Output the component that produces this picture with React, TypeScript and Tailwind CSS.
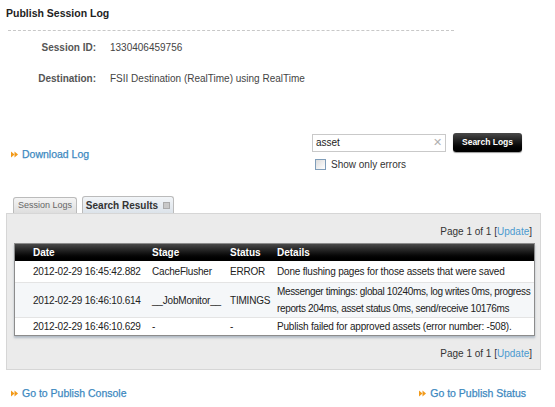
import React from "react";

const Arrow = () => (
  <svg width="7" height="7" viewBox="0 0 7 7" className="shrink-0">
    <polygon points="0,0.5 3.5,3.5 0,6.5" fill="#f29a1a" />
    <polygon points="3.5,0.5 7,3.5 3.5,6.5" fill="#f29a1a" />
  </svg>
);

const LinkArrow = ({ text }: { text: string }) => (
  <div className="flex items-center gap-[4px]">
    <Arrow />
    <span className="text-[#3d89bf] text-[10.5px] [-webkit-text-stroke:0.25px_#3d89bf]">{text}</span>
  </div>
);

const rows = [
  { date: "2012-02-29 16:45:42.882", stage: "CacheFlusher", status: "ERROR", details: ["Done flushing pages for those assets that were saved"], cls: "bg-white h-[21px]" },
  { date: "2012-02-29 16:46:10.614", stage: "__JobMonitor__", status: "TIMINGS", details: ["Messenger timings: global 10240ms, log writes 0ms, progress", "reports 204ms, asset status 0ms, send/receive 10176ms"], cls: "bg-[#f5f7f9] h-[35px]" },
  { date: "2012-02-29 16:46:10.629", stage: "-", status: "-", details: ["Publish failed for approved assets (error number: -508)."], cls: "bg-white h-[18px]" },
];

const PageLine = () => (
  <div className="flex justify-end pr-[8px] text-[10px] text-[#333] leading-[12px]">
    Page 1 of 1 [<span className="text-[#4a9ad0]">Update</span>]
  </div>
);

export default function App() {
  return (
    <div
      className="w-[555px] h-[407px] bg-white text-[#333] overflow-hidden"
      style={{ fontFamily: '"Liberation Sans", Arial, sans-serif' }}
    >
      <div className="pl-[6px] pt-[6px] text-[10.5px] font-bold text-[#222] leading-[14px]">Publish Session Log</div>
      <div className="ml-[8px] mt-[10px] w-[446px] border-t border-dashed border-[#c8c8c8]" />
      <div className="mt-[9px] flex items-center h-[14px] text-[10px]">
        <div className="w-[96px] text-right font-bold text-[#555]">Session ID:</div>
        <div className="ml-[14px] text-[#444]">1330406459756</div>
      </div>
      <div className="mt-[17px] flex items-center h-[14px] text-[10px]">
        <div className="w-[96px] text-right font-bold text-[#555]">Destination:</div>
        <div className="ml-[14px] text-[#444]">FSII Destination (RealTime) using RealTime</div>
      </div>

      <div className="mt-[48px] flex items-start">
        <div className="pl-[11px] pt-[14px]">
          <LinkArrow text="Download Log" />
        </div>
        <div className="ml-auto mr-[33px] flex flex-col">
          <div className="flex items-center">
            <div className="w-[134px] h-[18px] border border-[#c9c9c9] bg-white flex items-center px-[3px] text-[10px] text-[#222]">
              <span className="flex-1">asset</span>
              <span className="text-[#b0b0b0] text-[11px] leading-none">✕</span>
            </div>
            <button className="ml-[7px] w-[69px] h-[19px] rounded-[3px] bg-gradient-to-b from-[#4a4a4a] to-[#000] text-white text-[8.5px] font-bold shadow-[0_1px_1px_rgba(0,0,0,0.4)]">
              Search Logs
            </button>
          </div>
          <div className="mt-[5px] flex items-center pl-[3px] text-[10px] text-[#333]">
            <div className="w-[11px] h-[11px] border border-[#7f9db9] bg-gradient-to-br from-[#dcdcdc] to-white" />
            <span className="ml-[5px]">Show only errors</span>
          </div>
        </div>
      </div>

      <div className="mt-[23px] flex items-end pl-[13px] h-[18px]">
        <div className="h-[16px] w-[64px] border border-b-0 border-[#bbb] rounded-t-[3px] bg-gradient-to-b from-[#f4f4f4] to-[#dedede] flex items-center justify-center text-[9px] text-[#666]">
          Session Logs
        </div>
        <div className="ml-[5px] h-[17px] w-[92px] border border-b-0 border-[#bbb] rounded-t-[3px] bg-gradient-to-b from-[#f2f5f8] to-[#dce3ea] flex items-center justify-center gap-[5px] text-[10px] font-bold text-[#333]">
          Search Results
          <span className="w-[7px] h-[7px] bg-[#c8c8c8] border border-[#aaa] inline-block" />
        </div>
      </div>
      <div className="mx-[6px] w-[535px] h-[157px] bg-[#ebebeb] border border-[#d6d6d6] pt-[12px]">
        <PageLine />
        <div className="mt-[5px] ml-[7px] mr-[5px] border border-[#8c8c8c] bg-white shadow-[0_2px_2px_rgba(120,140,160,0.5)]">
          <div className="flex h-[17px] items-center bg-gradient-to-b from-[#4a4a4a] to-[#000] text-white font-bold text-[10px]">
            <div className="w-[137px] shrink-0 pl-[18px]">Date</div>
            <div className="w-[78px] shrink-0">Stage</div>
            <div className="w-[47px] shrink-0">Status</div>
            <div className="flex-1">Details</div>
          </div>
          {rows.map((r, i) => (
            <div key={i} className={`flex items-center ${r.cls} ${i > 0 ? "border-t border-[#e4e4e4]" : ""} text-[10px] text-[#222] tracking-[-0.2px] whitespace-nowrap`}>
              <div className="w-[137px] shrink-0 pl-[18px]">{r.date}</div>
              <div className="w-[78px] shrink-0">{r.stage}</div>
              <div className="w-[47px] shrink-0">{r.status}</div>
              <div className={`flex-1 min-w-0 leading-[17px] ${r.details.length > 1 ? "tracking-[-0.35px]" : ""}`}>
                {r.details.map((d, j) => (
                  <div key={j}>{d}</div>
                ))}
              </div>
            </div>
          ))}
        </div>
        <div className="mt-[12px]">
          <PageLine />
        </div>
      </div>

      <div className="mt-[16px] flex items-center px-[11px]">
        <LinkArrow text="Go to Publish Console" />
        <div className="ml-auto mr-[18px]">
          <LinkArrow text="Go to Publish Status" />
        </div>
      </div>
    </div>
  );
}
